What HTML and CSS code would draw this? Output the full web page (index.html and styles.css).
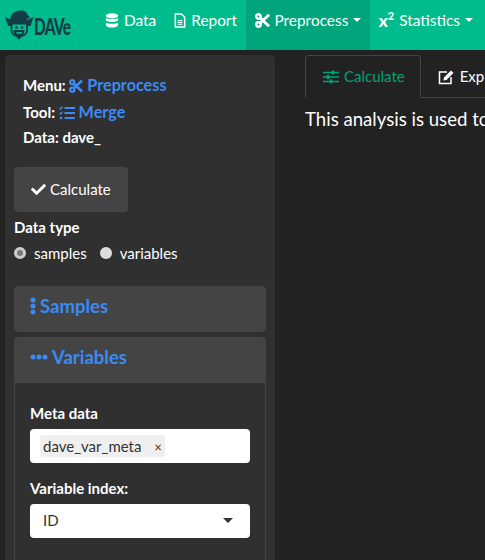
FILE: index.html
```html
<!DOCTYPE html>
<html lang="en">
<head>
    <meta charset="UTF-8">
    <title>DAVe</title>
    <link rel="stylesheet" href="styles.css">
</head>
<body>
    <svg class="defs" width="0" height="0">
        <symbol id="i-cut" viewBox="0 0 16 16">
            <circle cx="3.7" cy="3.7" r="2.4" fill="none" stroke="currentColor" stroke-width="2.600"/>
            <circle cx="3.7" cy="12.300" r="2.4" fill="none" stroke="currentColor" stroke-width="2.600"/>
            <path d="M5.200 5.200 15 14.200M5.200 10.800 15 1.800" fill="none" stroke="currentColor" stroke-width="3"/>
        </symbol>
        <symbol id="i-check" viewBox="0 0 512 512">
            <path fill="currentColor" d="M173.898 439.404l-166.4-166.4c-9.997-9.997-9.997-26.206 0-36.204l36.203-36.204c9.997-9.998 26.207-9.998 36.204 0L192 312.69 432.095 72.596c9.997-9.997 26.207-9.997 36.204 0l36.203 36.204c9.997 9.997 9.997 26.206 0 36.204l-294.4 294.401c-9.998 9.997-26.207 9.997-36.204-.001z"/>
        </symbol>
    </svg>

    <nav class="navbar">
        <a class="brand" href="#">
            <svg class="brand-mark" viewBox="0 0 29 30" width="29" height="30">
                <path fill="#123c46" d="M5 11C5 4 10 .5 16 .5c4 0 6 2 7 5l1.500 1-.5 2.500-2-1V11z"/>
                <path fill="#123c46" d="M0 7l6 3v6H3zM28.500 7l-6 3v6h3z"/>
                <path fill="none" stroke="#123c46" stroke-width="1.800" d="M6.500 13v8c0 3 3 5 7.500 5s8-2 8-5v-8"/>
                <rect x="5" y="10.500" width="18.500" height="4" fill="#123c46"/>
                <path fill="#123c46" d="M8.500 20h11c.5 3-1.500 6-5.500 9.500C10 26 8 23 8.500 20z"/>
                <circle cx="11.500" cy="17.500" r="1.300" fill="#123c46"/>
                <circle cx="17" cy="17.500" r="1.300" fill="#123c46"/>
                <rect x="11.500" y="22" width="5.500" height="1.800" fill="#00bc8c"/>
            </svg>
            <span class="brand-name">DAVe</span>
        </a>
        <a class="nav-item" href="#">
            <svg class="icon" viewBox="0 0 14 16" width="14" height="15">
                <ellipse cx="7" cy="3" rx="6.500" ry="2.800" fill="currentColor"/>
                <path fill="currentColor" d="M.5 5.200C2 7 12 7 13.500 5.200V8C12 10 2 10 .5 8zM.5 10C2 12 12 12 13.500 10v3c-1 3.400-12 3.400-13 0z"/>
            </svg>
            Data
        </a>
        <a class="nav-item" href="#">
            <svg class="icon" viewBox="0 0 12 16" width="12" height="15">
                <path fill="none" stroke="currentColor" stroke-width="1.600" d="M1 1h6.500L11 4.500V15H1z"/>
                <path fill="none" stroke="currentColor" stroke-width="1.300" d="M3.500 8h5M3.500 10h5M3.500 12h5"/>
            </svg>
            Report
        </a>
        <a class="nav-item active" href="#">
            <svg class="icon" width="15" height="15"><use href="#i-cut"/></svg>
            Preprocess <span class="caret"></span>
        </a>
        <a class="nav-item" href="#">
            <b class="stat-icon">x<sup>2</sup></b>
            Statistics <span class="caret"></span>
        </a>
    </nav>

    <div class="page">
        <aside class="well">
            <div class="crumbs">
                <p>Menu: <a href="#"><svg class="icon" width="14" height="14"><use href="#i-cut"/></svg> Preprocess</a></p>
                <p>Tool: <a href="#">
                    <svg class="icon" viewBox="0 0 16 14" width="16" height="14">
                        <path fill="none" stroke="currentColor" stroke-width="1.300" d="M.5 2l1 1L3.500.8M.5 7l1 1 2-2.200"/>
                        <circle cx="2" cy="12" r="1.300" fill="currentColor"/>
                        <path fill="none" stroke="currentColor" stroke-width="2" d="M5.500 2H16M5.500 7H16M5.500 12H16"/>
                    </svg> Merge</a></p>
                <p>Data: dave_</p>
            </div>

            <button class="btn" type="button">
                <svg class="icon" width="15" height="15"><use href="#i-check"/></svg> Calculate
            </button>

            <div class="field-type">
                <label class="label">Data type</label>
                <div class="radios">
                    <label><input type="radio" name="type" checked> samples</label>
                    <label><input type="radio" name="type"> variables</label>
                </div>
            </div>

            <section class="panel">
                <h4 class="panel-heading">
                    <svg class="icon" viewBox="0 0 6 18" width="6" height="18">
                        <circle cx="3" cy="3" r="2.500" fill="currentColor"/>
                        <circle cx="3" cy="9" r="2.500" fill="currentColor"/>
                        <circle cx="3" cy="15" r="2.500" fill="currentColor"/>
                    </svg>
                    Samples
                </h4>
            </section>

            <section class="panel">
                <h4 class="panel-heading">
                    <svg class="icon" viewBox="0 0 18 6" width="18" height="6">
                        <circle cx="3" cy="3" r="2.500" fill="currentColor"/>
                        <circle cx="9" cy="3" r="2.500" fill="currentColor"/>
                        <circle cx="15" cy="3" r="2.500" fill="currentColor"/>
                    </svg>
                    Variables
                </h4>
                <div class="panel-body">
                    <label class="label">Meta data</label>
                    <div class="input tags">
                        <span class="tag">dave_var_meta <i class="tag-x">×</i></span>
                    </div>
                    <label class="label">Variable index:</label>
                    <div class="input select">ID <span class="select-caret"></span></div>
                </div>
            </section>
        </aside>

        <main class="main">
            <ul class="tabs">
                <li class="tab active">
                    <svg class="icon" viewBox="0 0 16 14" width="16" height="14">
                        <path fill="none" stroke="currentColor" stroke-width="1.600" d="M0 2.500h16M0 7h16M0 11.500h16"/>
                        <path fill="none" stroke="currentColor" stroke-width="2.600" d="M10 .5v4M5 5v4M8 9.500v4"/>
                    </svg>
                    Calculate
                </li>
                <li class="tab">
                    <svg class="icon" viewBox="0 0 17 16" width="17" height="16">
                        <path fill="none" stroke="currentColor" stroke-width="1.500" d="M9 3H1.500v11.500H13V8"/>
                        <path fill="currentColor" d="M6 8.500l7-7 2.500 2.500-7 7L5.500 11.500z"/>
                    </svg>
                    Explore
                </li>
            </ul>
            <p class="lead">This analysis is used to merge data sets</p>
        </main>
    </div>
</body>
</html>
```

FILE: styles.css
```css
html, body {
    height: 560px;
    overflow: hidden;
}

body {
    margin: 0;
    background-color: #222222;
    color: #ffffff;
    font-family: Lato, "Liberation Sans", sans-serif;
    font-size: 15px;
    line-height: 21px;
}

a {
    color: inherit;
    text-decoration: none;
}

.defs {
    position: absolute;
}

.icon {
    vertical-align: -2px;
}

/* navbar */
.navbar {
    display: flex;
    height: 50px;
    background-color: #00bc8c;
    white-space: nowrap;
}

.brand {
    display: flex;
    align-items: center;
    width: 96px;
    padding: 0 0 0 5px;
    box-sizing: border-box;
    color: #123c46;
}

.brand-mark {
    flex: none;
}

.brand-name {
    font-size: 22px;
    font-weight: 900;
    letter-spacing: -1px;
    margin-top: 2px;
    transform: scaleX(0.7);
    transform-origin: left center;
}

.nav-item {
    display: flex;
    align-items: center;
    gap: 5px;
    padding: 0 9px 10px;
    color: #ffffff;
    font-size: 15.400px;
}

.nav-item.active {
    gap: 4.500px;
    background-color: #00a57b;
}

.stat-icon {
    font-size: 17px;
    font-weight: 900;
}

.stat-icon sup {
    font-size: 11px;
    line-height: 0;
}

.caret {
    width: 0;
    height: 0;
    border-top: 4px solid #ffffff;
    border-left: 4px solid transparent;
    border-right: 4px solid transparent;
}

/* page */
.page {
    display: flex;
    padding: 5px 0 0 5px;
    gap: 30px;
}

.well {
    flex: none;
    width: 270px;
    box-sizing: border-box;
    height: 520px;
    padding: 19px 9px 0;
    background-color: #303030;
    border-radius: 4px;
}

.crumbs {
    padding-left: 9px;
    font-weight: 700;
}

.crumbs p {
    margin: 0 0 5px;
    height: 21.500px;
}

.crumbs a {
    color: #3a8bf5;
    font-size: 16.200px;
}

.btn {
    display: block;
    margin-top: 18px;
    width: 114px;
    height: 45px;
    padding: 0;
    border: none;
    border-radius: 4px;
    background-color: #444444;
    color: #ffffff;
    font: inherit;
}

.label {
    display: block;
    font-weight: 700;
}

.field-type {
    margin-top: 5px;
}

.radios {
    display: flex;
    gap: 13px;
    margin-top: 5px;
}

.radios label {
    display: flex;
    align-items: center;
    gap: 8px;
}

.radios input {
    appearance: none;
    width: 12px;
    height: 12px;
    margin: 0;
    border-radius: 50%;
    background-color: #dddddd;
}

.radios input:checked {
    border: 3px solid #cccccc;
    background-color: #777777;
    box-sizing: border-box;
}

/* panels */
.panel {
    margin-top: 5px;
    border-radius: 4px;
    background-color: #444444;
}

.field-type + .panel {
    margin-top: 22px;
}

.panel-heading {
    margin: 0;
    height: 46px;
    box-sizing: border-box;
    padding: 0 16px 5px;
    display: flex;
    align-items: center;
    gap: 4px;
    color: #3a8bf5;
    font-size: 18.500px;
    font-weight: 700;
}

.panel-body {
    padding: 20px 15px 40px;
    border: 1px solid #444444;
    border-top: none;
    background-color: #303030;
}

.input {
    box-sizing: border-box;
    width: 220px;
    height: 34px;
    margin: 5px 0 15px;
    padding: 0 13px;
    display: flex;
    align-items: center;
    background-color: #ffffff;
    border-radius: 4px;
    color: #333333;
}

.tags {
    padding: 0 10px;
}

.tag {
    display: block;
    padding: 0 3px;
    height: 22px;
    line-height: 22px;
    background-color: #efefef;
    border-radius: 3px;
    font-size: 15px;
}

.tag-x {
    margin-left: 9px;
    font-style: normal;
    font-size: 13px;
}

.select {
    justify-content: space-between;
}

.select-caret {
    margin-right: 4px;
    border-top: 5px solid #333333;
    border-left: 5px solid transparent;
    border-right: 5px solid transparent;
}

/* main */
.main {
    flex: 1;
    min-width: 0;
}

.tabs {
    display: flex;
    margin: 0;
    padding: 0;
    list-style: none;
    border-bottom: 1px solid #444444;
    height: 42px;
    white-space: nowrap;
}

.tab {
    display: flex;
    align-items: center;
    gap: 5px;
    height: 43px;
    padding: 0 17px;
    box-sizing: border-box;
}

.tab.active {
    padding-right: 15px;
    border: 1px solid #444444;
    border-bottom-color: #222222;
    border-radius: 4px 4px 0 0;
    color: #00a379;
}

.lead {
    margin: 9px 0 0;
    font-size: 18.600px;
    line-height: 24px;
    white-space: nowrap;
}
```
